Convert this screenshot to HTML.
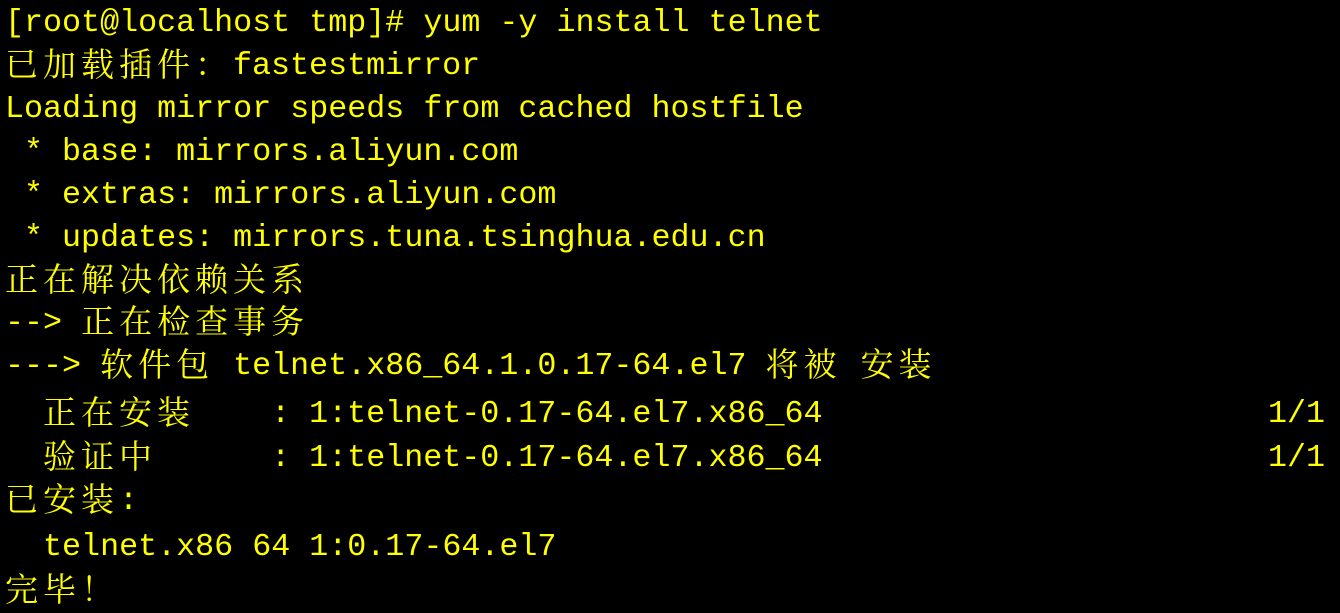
<!DOCTYPE html>
<html><head><meta charset="utf-8"><style>
html,body{margin:0;padding:0;background:#000;width:1340px;height:611px;overflow:hidden}
.l{position:absolute;left:5px;white-space:pre;color:#ffff00;font-family:"Liberation Mono",monospace;font-size:31.7px;line-height:43px;height:43px;margin-top:2px}
.c{display:inline-block;vertical-align:top;height:43px;line-height:43px;position:relative;top:-4px;font-family:"Noto Serif CJK SC","Noto Sans CJK SC",serif;font-size:33px;letter-spacing:5px}
</style></head><body>
<div class="l" style="top:0">[root@localhost tmp]# yum -y install telnet</div>
<div class="l" style="top:43px"><span class="c">已加载插件：</span>fastestmirror</div>
<div class="l" style="top:86px">Loading mirror speeds from cached hostfile</div>
<div class="l" style="top:129px"> * base: mirrors.aliyun.com</div>
<div class="l" style="top:172px"> * extras: mirrors.aliyun.com</div>
<div class="l" style="top:215px"> * updates: mirrors.tuna.tsinghua.edu.cn</div>
<div class="l" style="top:258px"><span class="c">正在解决依赖关系</span></div>
<div class="l" style="top:300px">--&gt; <span class="c">正在检查事务</span></div>
<div class="l" style="top:343px">---&gt; <span class="c">软件包</span> telnet.x86_64.1.0.17-64.el7 <span class="c">将被</span> <span class="c">安装</span></div>
<div class="l" style="top:391px">  <span class="c">正在安装</span>    : 1:telnet-0.17-64.el7.x86_64</div>
<div class="l" style="top:391px;left:1268px">1/1</div>
<div class="l" style="top:435px">  <span class="c">验证中</span>      : 1:telnet-0.17-64.el7.x86_64</div>
<div class="l" style="top:435px;left:1268px">1/1</div>
<div class="l" style="top:478px"><span class="c">已安装</span>:</div>
<div class="l" style="top:524px">  telnet.x86 64 1:0.17-64.el7</div>
<div class="l" style="top:568px"><span class="c">完毕！</span></div>
</body></html>
